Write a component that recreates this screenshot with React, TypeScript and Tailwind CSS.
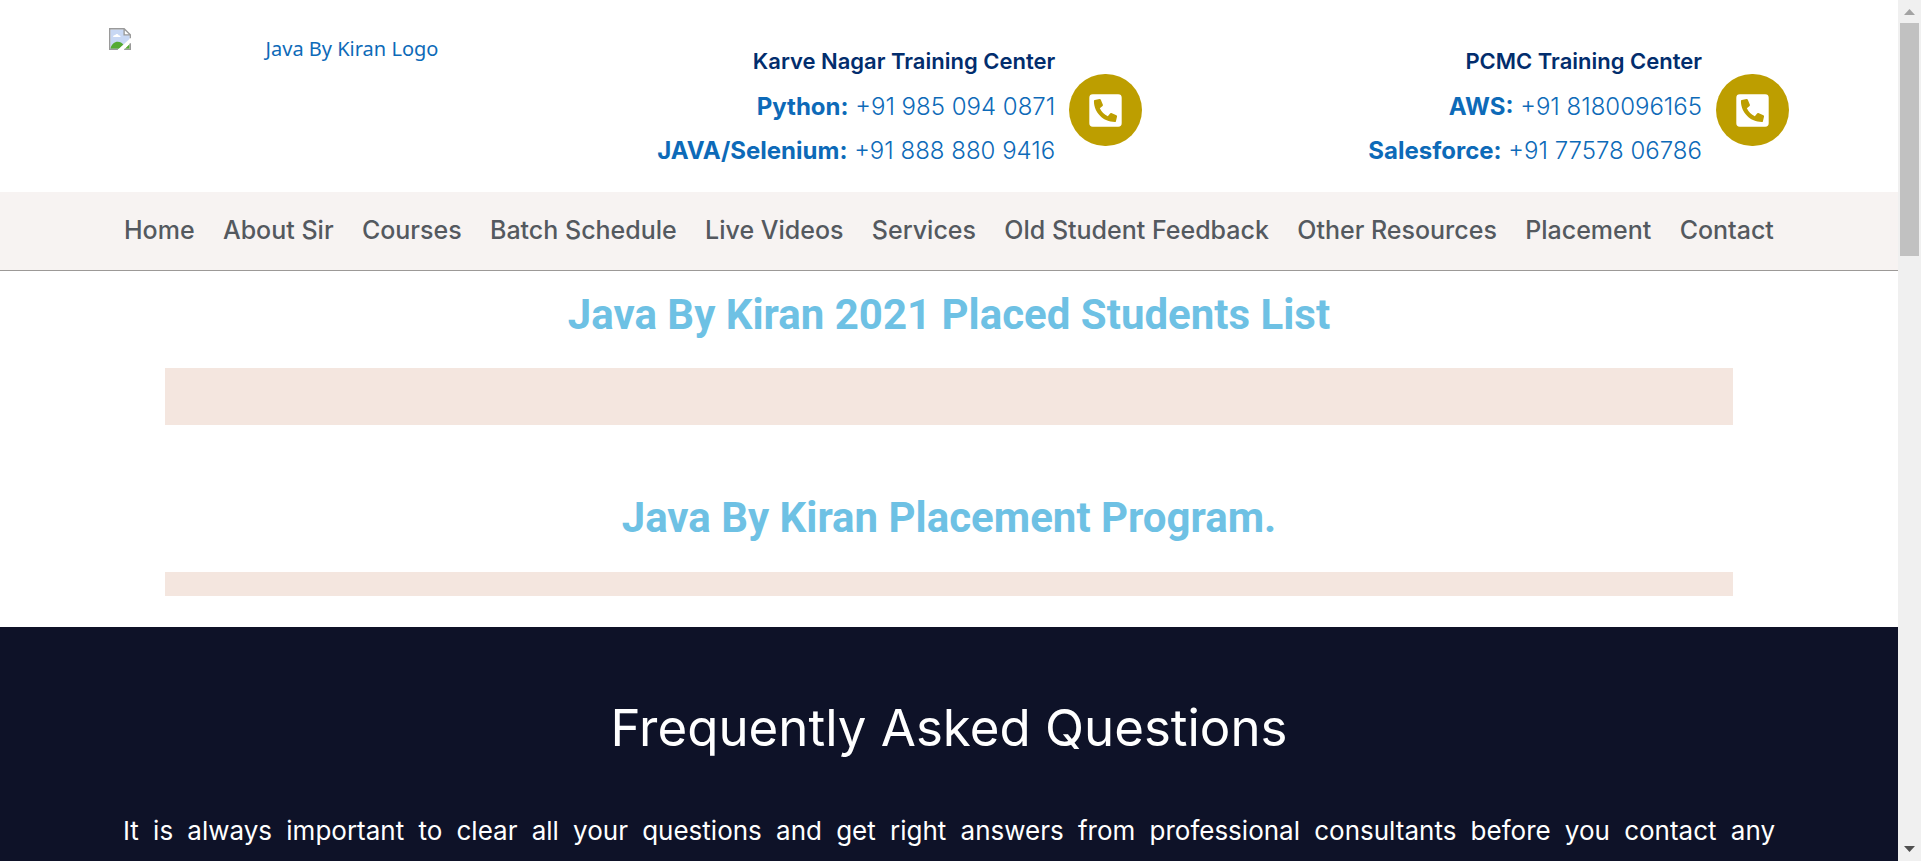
import { FaPhoneSquareAlt } from "react-icons/fa";

type Line = { label: string; number: string };

const navItems = [
  "Home",
  "About Sir",
  "Courses",
  "Batch Schedule",
  "Live Videos",
  "Services",
  "Old Student Feedback",
  "Other Resources",
  "Placement",
  "Contact",
];

function BrokenImage() {
  return (
    <svg viewBox="0 0 16 16" className="size-[22px] shrink-0" aria-hidden="true">
      <path d="M1 1h10l4 4v4l-6 6H1z" fill="#c8d8f4" />
      <path d="M3 6.500c0-1 .8-1.500 1.600-1.400C5 4 6.500 4 7 5.200c1 0 1.400.6 1.400 1.300z" fill="#fff" />
      <path d="M1 15c.8-3.200 3-5 5.300-5 1.800 0 3.200.8 4.200 2.200L7.500 15z" fill="#55aa33" />
      <path d="M11.500 15 15 11.500V15z" fill="#55aa33" />
      <path d="M6.800 15.500 15.500 7.500v3.500L11 15.500z" fill="#fff" />
      <path d="M11 1v4h4z" fill="#fff" />
      <path d="M6.500 15.500h-6V.5H11L15.500 5v2.500M11 .5V5h4.500M15.500 11v4.500H11" fill="none" stroke="#9a9a9a" />
    </svg>
  );
}

function Center({ title, lines }: { title: string; lines: Line[] }) {
  return (
    <div className="flex items-start justify-end gap-[14px]">
      <div className="text-right text-[24px] leading-[44px] text-[#0d6ab8]">
        <h2 className="text-[22px] font-semibold leading-[47px] text-[#022d6d]">{title}</h2>
        {lines.map((l) => (
          <p key={l.label}>
            <a href="#call" className="whitespace-nowrap font-light">
              <strong className="font-bold">{l.label}</strong> {l.number}
            </a>
          </p>
        ))}
      </div>
      <a
        href="#call"
        aria-label={"Call " + title}
        className="mt-9 flex h-[72px] w-[73px] shrink-0 items-center justify-center rounded-full bg-[#bd9e00] text-white"
      >
        <FaPhoneSquareAlt className="size-[37px]" />
      </a>
    </div>
  );
}

function Scrollbar() {
  return (
    <div className="flex w-[23px] shrink-0 flex-col items-center bg-[#f0f0f0]" aria-hidden="true">
      <svg viewBox="0 0 23 23" className="h-[23px] w-[23px] shrink-0">
        <path d="M6 15 11.500 9 17 15z" fill="#a3a3a3" />
      </svg>
      <div className="h-[233px] w-[19px] bg-[#c1c1c1]" />
      <svg viewBox="0 0 23 23" className="mt-auto h-[23px] w-[23px] shrink-0">
        <path d="M6 8 11.500 14 17 8z" fill="#505050" />
      </svg>
    </div>
  );
}

export default function App() {
  return (
    <div className="flex h-screen overflow-hidden bg-white font-['Inter',sans-serif]">
      <div className="min-w-0 flex-1 overflow-hidden">
        <header className="grid h-48 grid-cols-[46fr_77fr_77fr] px-[109px] pt-[38px]">
          <a href="#home" className="-mt-[10px] flex pr-[57px] text-[#0d6ab8]">
            <BrokenImage />
            <span className="ml-auto whitespace-nowrap pt-[7px] font-['Noto_Sans',sans-serif] text-[20px] leading-[28px]">
              Java By Kiran Logo
            </span>
          </a>
          <Center
            title="Karve Nagar Training Center"
            lines={[
              { label: "Python:", number: "+91 985 094 0871" },
              { label: "JAVA/Selenium:", number: "+91 888 880 9416" },
            ]}
          />
          <Center
            title="PCMC Training Center"
            lines={[
              { label: "AWS:", number: "+91 8180096165" },
              { label: "Salesforce:", number: "+91 77578 06786" },
            ]}
          />
        </header>

        <nav className="border-b border-[#9c9997] bg-[#f7f3f2] px-[124px]">
          <ul className="flex h-[78px] items-center justify-between whitespace-nowrap text-[25px] font-medium text-[#54595f]">
            {navItems.map((item) => (
              <li key={item}>
                <a href="#nav">{item}</a>
              </li>
            ))}
          </ul>
        </nav>

        <main>
          <section className="px-[165px] pt-5 text-center font-['Roboto',sans-serif] text-[#6ec1e4]">
            <h2 className="text-[42px] font-bold leading-[48px]">Java By Kiran 2021 Placed Students List</h2>
            <div className="mt-[29px] h-[57px] bg-[#f4e6df]" />
            <h2 className="mt-[69px] text-[42px] font-bold leading-[48px]">Java By Kiran Placement Program.</h2>
            <div className="mt-[30px] h-6 bg-[#f4e6df]" />
          </section>

          <section className="mt-[31px] bg-[#0e1228] px-[123px] pt-[69px] pb-20 text-white">
            <h2 className="text-center text-[51px] leading-[64px]">Frequently Asked Questions</h2>
            <p className="mt-[47px] text-justify text-[26px] leading-[48px] [text-align-last:justify]">
              It is always important to clear all your questions and get right answers from professional consultants
              before you contact any
            </p>
          </section>
        </main>
      </div>
      <Scrollbar />
    </div>
  );
}
